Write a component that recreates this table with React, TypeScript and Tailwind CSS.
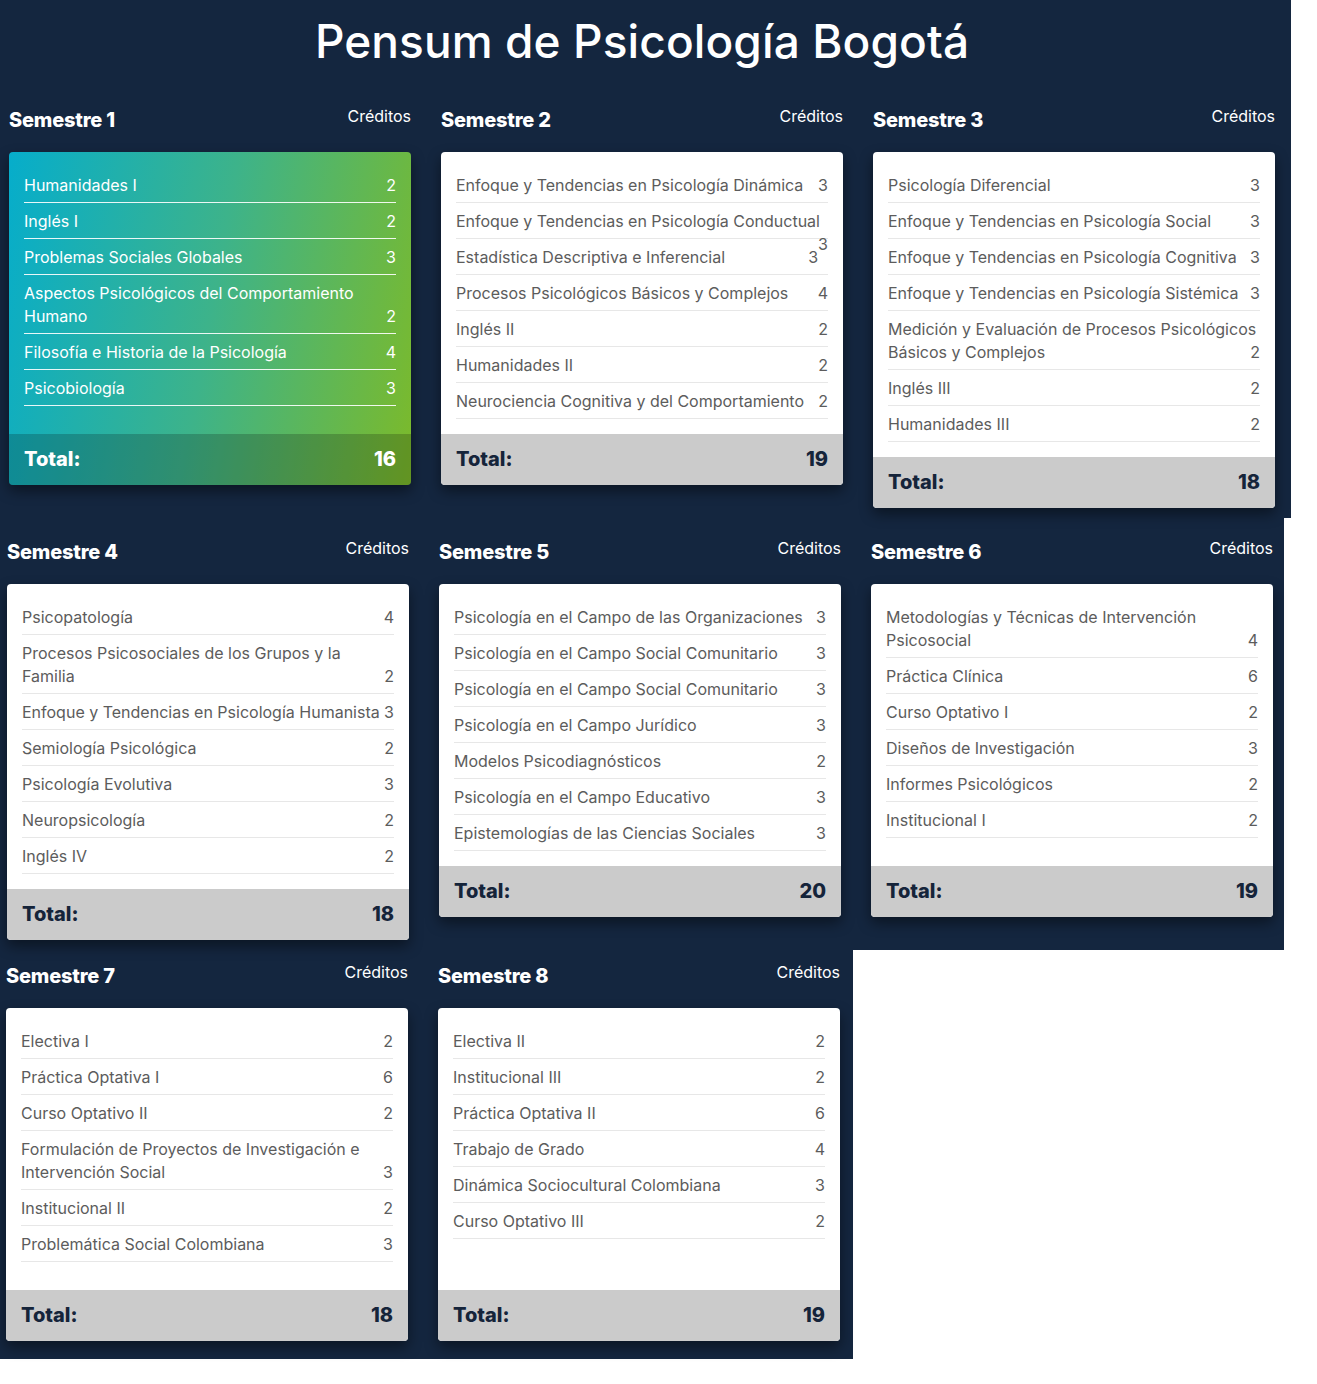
import React from "react";

type Course = { name: string; cr: number; br?: [string, string]; push?: boolean };
type Sem = { n: number; courses: Course[]; total: number; featured?: boolean };

const S: Sem[] = [
  {
    n: 1,
    featured: true,
    total: 16,
    courses: [
      { name: "Humanidades I", cr: 2 },
      { name: "Inglés I", cr: 2 },
      { name: "Problemas Sociales Globales", cr: 3 },
      { name: "", cr: 2, br: ["Aspectos Psicológicos del Comportamiento", "Humano"] },
      { name: "Filosofía e Historia de la Psicología", cr: 4 },
      { name: "Psicobiología", cr: 3 },
    ],
  },
  {
    n: 2,
    total: 19,
    courses: [
      { name: "Enfoque y Tendencias en Psicología Dinámica", cr: 3 },
      { name: "Enfoque y Tendencias en Psicología Conductual", cr: 3, push: true },
      { name: "Estadística Descriptiva e Inferencial", cr: 3 },
      { name: "Procesos Psicológicos Básicos y Complejos", cr: 4 },
      { name: "Inglés II", cr: 2 },
      { name: "Humanidades II", cr: 2 },
      { name: "Neurociencia Cognitiva y del Comportamiento", cr: 2 },
    ],
  },
  {
    n: 3,
    total: 18,
    courses: [
      { name: "Psicología Diferencial", cr: 3 },
      { name: "Enfoque y Tendencias en Psicología Social", cr: 3 },
      { name: "Enfoque y Tendencias en Psicología Cognitiva", cr: 3 },
      { name: "Enfoque y Tendencias en Psicología Sistémica", cr: 3 },
      { name: "", cr: 2, br: ["Medición y Evaluación de Procesos Psicológicos", "Básicos y Complejos"] },
      { name: "Inglés III", cr: 2 },
      { name: "Humanidades III", cr: 2 },
    ],
  },
  {
    n: 4,
    total: 18,
    courses: [
      { name: "Psicopatología", cr: 4 },
      { name: "", cr: 2, br: ["Procesos Psicosociales de los Grupos y la", "Familia"] },
      { name: "Enfoque y Tendencias en Psicología Humanista", cr: 3 },
      { name: "Semiología Psicológica", cr: 2 },
      { name: "Psicología Evolutiva", cr: 3 },
      { name: "Neuropsicología", cr: 2 },
      { name: "Inglés IV", cr: 2 },
    ],
  },
  {
    n: 5,
    total: 20,
    courses: [
      { name: "Psicología en el Campo de las Organizaciones", cr: 3 },
      { name: "Psicología en el Campo Social Comunitario", cr: 3 },
      { name: "Psicología en el Campo Social Comunitario", cr: 3 },
      { name: "Psicología en el Campo Jurídico", cr: 3 },
      { name: "Modelos Psicodiagnósticos", cr: 2 },
      { name: "Psicología en el Campo Educativo", cr: 3 },
      { name: "Epistemologías de las Ciencias Sociales", cr: 3 },
    ],
  },
  {
    n: 6,
    total: 19,
    courses: [
      { name: "", cr: 4, br: ["Metodologías y Técnicas de Intervención", "Psicosocial"] },
      { name: "Práctica Clínica", cr: 6 },
      { name: "Curso Optativo I", cr: 2 },
      { name: "Diseños de Investigación", cr: 3 },
      { name: "Informes Psicológicos", cr: 2 },
      { name: "Institucional I", cr: 2 },
    ],
  },
  {
    n: 7,
    total: 18,
    courses: [
      { name: "Electiva I", cr: 2 },
      { name: "Práctica Optativa I", cr: 6 },
      { name: "Curso Optativo II", cr: 2 },
      { name: "", cr: 3, br: ["Formulación de Proyectos de Investigación e", "Intervención Social"] },
      { name: "Institucional II", cr: 2 },
      { name: "Problemática Social Colombiana", cr: 3 },
    ],
  },
  {
    n: 8,
    total: 19,
    courses: [
      { name: "Electiva II", cr: 2 },
      { name: "Institucional III", cr: 2 },
      { name: "Práctica Optativa II", cr: 6 },
      { name: "Trabajo de Grado", cr: 4 },
      { name: "Dinámica Sociocultural Colombiana", cr: 3 },
      { name: "Curso Optativo III", cr: 2 },
    ],
  },
];

function Row({ c, featured }: { c: Course; featured?: boolean }) {
  return (
    <div
      className={
        featured
          ? "border-b border-white/90 pb-[5px] pt-[7px] leading-[23px] text-white"
          : "border-b border-[#e7e7e7] pb-[5px] pt-[7px] leading-[23px] text-[#5c5c5c]"
      }
    >
      {c.br ? (
        <span>
          {c.br[0]}
          <br />
          {c.br[1]}
        </span>
      ) : c.push ? (
        <span className="inline-block w-full">{c.name}</span>
      ) : (
        <span>{c.name}</span>
      )}
      <span className="float-right">{c.cr}</span>
    </div>
  );
}

function Card({ s }: { s: Sem }) {
  return (
    <div className="w-[402px]">
      <div className="flex h-[48px] items-start justify-between">
        <h2 className="mt-[2px] text-[20px] font-extrabold leading-[28px] tracking-[-0.2px] text-white">
          Semestre {s.n}
        </h2>
        <span className="text-[16px] leading-[24px] text-white">Créditos</span>
      </div>
      <div
        className={
          s.featured
            ? "overflow-hidden rounded-[4px] bg-[linear-gradient(100deg,#06adcb_0%,#3db38a_50%,#7cba2a_100%)] shadow-[0_6px_14px_rgba(0,0,0,0.45)]"
            : "overflow-hidden rounded-[4px] bg-white shadow-[0_6px_14px_rgba(0,0,0,0.45)]"
        }
      >
        <div className="min-h-[282px] p-[15px] text-[16px]">
          {s.courses.map((c, i) => (
            <Row key={i} c={c} featured={s.featured} />
          ))}
        </div>
        <div
          className={
            s.featured
              ? "flex h-[51px] items-center justify-between bg-black/20 px-[15px] pb-[1px] text-[20px] font-extrabold text-white"
              : "flex h-[51px] items-center justify-between bg-[#cbcbcb] px-[15px] pb-[1px] text-[20px] font-extrabold text-[#15243a]"
          }
        >
          <span>Total:</span>
          <span>{s.total}</span>
        </div>
      </div>
    </div>
  );
}

export default function App() {
  return (
    <div className="min-h-[1384px] bg-white font-['Inter',sans-serif]">
      <section className="w-[1291px] bg-[#14263f] pb-[10px] pl-[9px]">
        <div className="h-[104px] w-[1266px] pt-[13px] text-center">
          <h1 className="text-[46px] font-medium leading-[56px] tracking-[0.1px] text-white">
            Pensum de Psicología Bogotá
          </h1>
        </div>
        <div className="grid w-[1266px] grid-cols-[402px_402px_402px] items-start gap-x-[30px]">
          <Card s={S[0]} />
          <Card s={S[1]} />
          <Card s={S[2]} />
        </div>
      </section>
      <section className="w-[1284px] bg-[#14263f] pb-[10px] pl-[7px] pt-[18px]">
        <div className="grid w-[1266px] grid-cols-[402px_402px_402px] items-start gap-x-[30px]">
          <Card s={S[3]} />
          <Card s={S[4]} />
          <Card s={S[5]} />
        </div>
      </section>
      <section className="w-[853px] bg-[#14263f] pb-[18px] pl-[6px] pt-[10px]">
        <div className="grid w-[834px] grid-cols-[402px_402px] items-start gap-x-[30px]">
          <Card s={S[6]} />
          <Card s={S[7]} />
        </div>
      </section>
    </div>
  );
}
